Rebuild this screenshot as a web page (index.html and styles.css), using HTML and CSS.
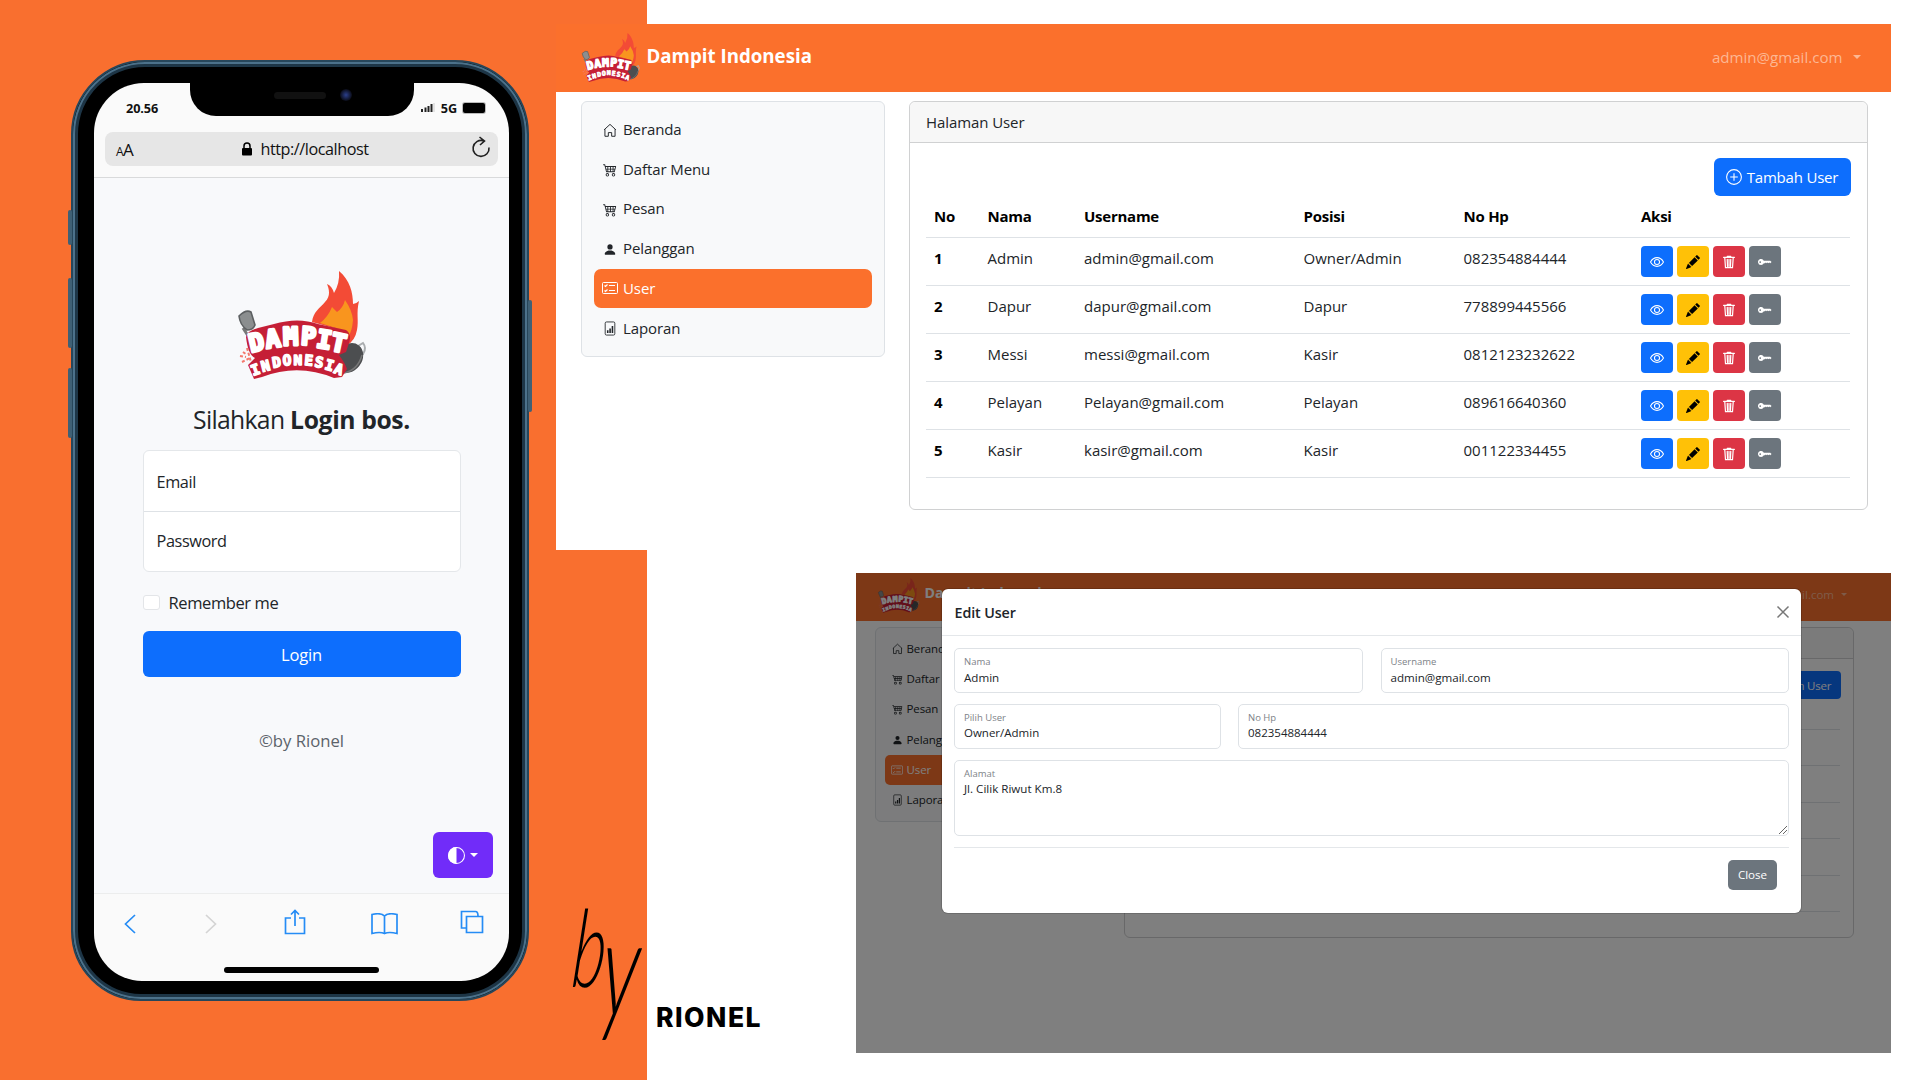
FILE: index.html
```html
<!DOCTYPE html>
<html lang="id">
<head>
<meta charset="utf-8">
<title>Dampit Indonesia</title>
<link rel="stylesheet" href="styles.css">
</head>
<body>
<svg class="sprite" aria-hidden="true">
  <symbol id="logo" viewBox="0 0 127 106" overflow="visible">
    <path d="M5 57L16 74" stroke="#777" stroke-width="3"/>
    <path d="M1 45Q8 38 13 41L17 54Q15 59 9 59Q2 54 1 45Z" fill="#8b8e8f" stroke="#5d6062" stroke-width="1.6"/>
    <path d="M5 81L9 84M2 85L8 86M4 91L12 87M9 77L13 91" stroke="#f4786c" stroke-width="2" stroke-dasharray="3 2"/>
    <path d="M74 51C75 41 82 37 87 31C93 25 91 18 89 13Q94 15 96 22Q102 12 101 0C112 9 115 22 115 33Q118 33 121 30C118 43 121 49 119 59Q117 70 109 74L96 57Z" fill="#f34b36"/>
    <path d="M82 52Q90 46 94 36L99 41Q105 37 107 29Q114 39 115 49Q114 61 110 66L98 57Z" fill="#f9951e"/>
    <path d="M120 75L125 72Q129 77 125 83L120 83" fill="none" stroke="#aaadaf" stroke-width="2"/>
    <ellipse cx="111" cy="87" rx="13" ry="16" fill="#4c4e50" transform="rotate(38 111 87)"/>
    <path d="M106 102Q120 99 124 84" fill="none" stroke="#777" stroke-width="1.5"/>
    <path d="M8 66Q9 60 20 57L36 53Q60 46 80 53L108 59Q114 63 111 72L108 81L101 84Q107 92 109 98L104 106L96 107Q60 92 24 106L16 108L10 94L17 87Q10 84 8 66Z" fill="#c51f36"/>
    <text class="logo-text logo-a" x="13 28.500 45.500 62.500 77.500 91.500" y="81.500 77.500 74.500 73.500 76 79" rotate="-13 -8 -2 4 9 12">DAMPIT</text>
    <text class="logo-text logo-b" x="15 24.500 35 45 55.500 66 76 86 95" y="105 101 97 94.500 93.500 94 95.500 98 101.500" rotate="-20 -14 -9 -4 0 5 10 15 20">INDONESIA</text>
  </symbol>
  <symbol id="house" viewBox="0 0 16 16"><path d="M1.200 7.300L8 1l6.800 6.300M2.200 6.600v8h3.900v-4.200h3.800v4.200h3.900v-8" fill="none" stroke="currentColor" stroke-width="1.100" stroke-linejoin="round"/></symbol>
  <symbol id="cart" viewBox="0 0 16 16"><path fill="currentColor" fill-rule="evenodd" d="M0 2.500A.5.5 0 0 1 .5 2H2a.5.5 0 0 1 .485.379L2.890 4H14.500a.5.5 0 0 1 .485.621l-1.500 6A.5.5 0 0 1 13 11H4a.5.5 0 0 1-.485-.379L1.610 3H.5a.5.5 0 0 1-.5-.5zM3.140 5l.5 2H5V5zM6 5v2h2V5zm3 0v2h2V5zm3 0v2h1.360l.5-2zm1.110 3H12v2h.610zM11 8H9v2h2zM8 8H6v2h2zM5 8H3.890l.5 2H5zM5 13a1 1 0 1 0 0 2 1 1 0 0 0 0-2m-2 1a2 2 0 1 1 4 0 2 2 0 0 1-4 0m9-1a1 1 0 1 0 0 2 1 1 0 0 0 0-2m-2 1a2 2 0 1 1 4 0 2 2 0 0 1-4 0"/></symbol>
  <symbol id="person" viewBox="0 0 16 16"><path fill="currentColor" d="M3 14s-1 0-1-1 1-4 6-4 6 3 6 4-1 1-1 1zm5-6a3 3 0 1 0 0-6 3 3 0 0 0 0 6"/></symbol>
  <symbol id="checklist" viewBox="0 0 16 16"><g fill="none" stroke="currentColor"><rect x=".5" y="2.500" width="15" height="11" rx="1"/><path d="M7 5.500h6M7 10.500h6M2.500 5.500l1 1 2-2M2.500 10.500l1 1 2-2" stroke-width="1.100"/></g></symbol>
  <symbol id="graph" viewBox="0 0 16 16"><rect x="2.500" y=".5" width="11" height="15" rx="1.500" fill="none" stroke="currentColor"/><path d="M4.500 10h1.800v3H4.500zM7.200 8H9v5H7.200zM9.900 5h1.800v8H9.900z" fill="currentColor"/></symbol>
  <symbol id="eye" viewBox="0 0 16 16"><path d="M.6 8S3.300 3 8 3s7.400 5 7.400 5S12.700 13 8 13 .6 8 .6 8Z" fill="none" stroke="currentColor" stroke-width="1.200"/><circle cx="8" cy="8" r="2.900" fill="none" stroke="currentColor" stroke-width="1.200"/></symbol>
  <symbol id="pencil" viewBox="0 0 16 16"><path fill="currentColor" d="M12.854.146a.5.5 0 0 0-.707 0L10.500 1.793 14.207 5.500l1.647-1.646a.5.5 0 0 0 0-.708zm.646 6.061L9.793 2.500 3.293 9H3.500a.5.5 0 0 1 .5.5v.5h.5a.5.5 0 0 1 .5.5v.5h.5a.5.5 0 0 1 .5.5v.5h.5a.5.5 0 0 1 .5.5v.207zm-7.468 7.468A.5.5 0 0 1 6 13.500V13h-.5a.5.5 0 0 1-.5-.5V12h-.5a.5.5 0 0 1-.5-.5V11h-.5a.5.5 0 0 1-.5-.5V10h-.5a.5.5 0 0 1-.175-.032l-.179.178a.5.5 0 0 0-.11.168l-2 5a.5.5 0 0 0 .65.65l5-2a.5.5 0 0 0 .168-.11z"/></symbol>
  <symbol id="trash" viewBox="0 0 16 16"><path d="M1.800 2.700h12.400M6 1.500h4M3.200 3.500l.8 11h8l.8-11M6 5l.3 8M8 5v8M10 5l-.3 8" fill="none" stroke="currentColor" stroke-width="1.400" stroke-linecap="round"/></symbol>
  <symbol id="key" viewBox="0 0 16 16"><path fill="currentColor" fill-rule="evenodd" d="M3.500 11.500a3.500 3.500 0 1 1 3.163-5H14L15.500 8 14 9.500l-1-1-1 1-1-1-1 1-1-1-1 1H6.663a3.500 3.500 0 0 1-3.163 2M2.500 9a1 1 0 1 0 0-2 1 1 0 0 0 0 2"/></symbol>
  <symbol id="plus" viewBox="0 0 16 16"><path d="M8 4.200v7.600M4.200 8h7.600" stroke="currentColor" stroke-width="1.100"/><circle cx="8" cy="8" r="7.400" fill="none" stroke="currentColor" stroke-width="1.100"/></symbol>
</svg>

<div class="stage">
  <div class="backdrop-orange"></div>

  <section class="phone">
    <i class="key k1"></i><i class="key k2"></i><i class="key k3"></i><i class="key k4"></i>
    <div class="notch"><i class="speaker"></i><i class="camera"></i></div>
    <div class="screen">
      <div class="status">
        <b>20.56</b>
        <span class="status-right">
          <svg width="14" height="10" viewBox="0 0 14 10"><path d="M0 6h2v3H0zM3.500 4.500h2V9h-2zM6.500 3h2v6h-2zM9.500 1h2v8h-2z" fill="#222"/><path d="M12.500 0h1v9h-1z" fill="#ccc"/></svg>
          <b>5G</b><i class="battery"></i>
        </span>
      </div>
      <div class="urlbar">
        <span class="aa"><small>A</small>A</span>
        <span class="url"><svg width="10" height="14" viewBox="0 0 10 14"><path d="M2 6V4a3 3 0 0 1 6 0v2" fill="none" stroke="#000" stroke-width="1.500"/><rect y="6" width="10" height="7.500" rx="1"/></svg>http://localhost</span>
        <svg class="reload" width="20" height="22" viewBox="0 0 20 22"><path d="M12.500 4.800A8 8 0 1 0 18 11.500M8.500 1l5 4-4.500 4" fill="none" stroke="#222" stroke-width="1.600"/></svg>
      </div>
      <div class="login">
        <svg class="login-logo"><use href="#logo"/></svg>
        <h1>Silahkan <b>Login bos.</b></h1>
        <div class="fields"><div>Email</div><div>Password</div></div>
        <div class="remember"><i></i><span>Remember me</span></div>
        <div class="login-btn">Login</div>
        <p>©by Rionel</p>
        <div class="theme"><svg width="17" height="17" viewBox="0 0 16 16"><circle cx="8" cy="8" r="7.500" fill="none" stroke="#fff"/><path d="M8 0a8 8 0 0 0 0 16z" fill="#fff"/></svg><i class="caret"></i></div>
      </div>
      <div class="toolbar">
        <svg width="12" height="20" viewBox="0 0 12 20"><path d="M11 1L1.500 10l9.500 9"/></svg>
        <svg class="dim" width="12" height="20" viewBox="0 0 12 20"><path d="M1 1l9.500 9L1 19"/></svg>
        <svg class="share" width="22" height="26" viewBox="0 0 22 26"><path d="M7 9H1.500v15.500h19V9H15M11 17V1.500M7 5.500l4-4 4 4"/></svg>
        <svg class="book" width="27" height="22" viewBox="0 0 27 22"><path d="M13.500 3Q10-.5 1 1.500v19q8-2 12.500 0 4.500-2 12.500 0v-19Q17-.5 13.500 3v17.500"/></svg>
        <svg class="tabs" width="24" height="24" viewBox="0 0 24 24"><path d="M6.500 6.500h16v16h-16zM6 18H1.500V1.500h14q2.500 0 2.500 4.500"/></svg>
      </div>
      <div class="homebar"></div>
    </div>
  </section>

  <section class="panel panel-main">
    <header class="nav"><svg class="brand-logo"><use href="#logo"/></svg><b>Dampit Indonesia</b><span class="account">admin@gmail.com<i class="caret"></i></span></header>
    <div class="content">
      <nav class="side">
        <a><svg><use href="#house"/></svg>Beranda</a>
        <a><svg><use href="#cart"/></svg>Daftar Menu</a>
        <a><svg><use href="#cart"/></svg>Pesan</a>
        <a><svg><use href="#person"/></svg>Pelanggan</a>
        <a class="active"><svg class="wide"><use href="#checklist"/></svg>User</a>
        <a><svg><use href="#graph"/></svg>Laporan</a>
      </nav>
      <div class="card">
        <div class="card-head">Halaman User</div>
        <div class="card-body">
          <div class="add"><svg><use href="#plus"/></svg>Tambah User</div>
          <table>
            <colgroup><col class="c1"><col class="c2"><col class="c3"><col class="c4"><col class="c5"><col></colgroup>
            <thead><tr><th>No</th><th>Nama</th><th>Username</th><th>Posisi</th><th>No Hp</th><th>Aksi</th></tr></thead>
            <tbody>
              <tr><th>1</th><td>Admin</td><td>admin@gmail.com</td><td>Owner/Admin</td><td>082354884444</td><td><div class="acts"><i class="blue"><svg><use href="#eye"/></svg></i><i class="yellow"><svg><use href="#pencil"/></svg></i><i class="red"><svg><use href="#trash"/></svg></i><i class="gray"><svg><use href="#key"/></svg></i></div></td></tr>
              <tr><th>2</th><td>Dapur</td><td>dapur@gmail.com</td><td>Dapur</td><td>778899445566</td><td><div class="acts"><i class="blue"><svg><use href="#eye"/></svg></i><i class="yellow"><svg><use href="#pencil"/></svg></i><i class="red"><svg><use href="#trash"/></svg></i><i class="gray"><svg><use href="#key"/></svg></i></div></td></tr>
              <tr><th>3</th><td>Messi</td><td>messi@gmail.com</td><td>Kasir</td><td>0812123232622</td><td><div class="acts"><i class="blue"><svg><use href="#eye"/></svg></i><i class="yellow"><svg><use href="#pencil"/></svg></i><i class="red"><svg><use href="#trash"/></svg></i><i class="gray"><svg><use href="#key"/></svg></i></div></td></tr>
              <tr><th>4</th><td>Pelayan</td><td>Pelayan@gmail.com</td><td>Pelayan</td><td>089616640360</td><td><div class="acts"><i class="blue"><svg><use href="#eye"/></svg></i><i class="yellow"><svg><use href="#pencil"/></svg></i><i class="red"><svg><use href="#trash"/></svg></i><i class="gray"><svg><use href="#key"/></svg></i></div></td></tr>
              <tr><th>5</th><td>Kasir</td><td>kasir@gmail.com</td><td>Kasir</td><td>001122334455</td><td><div class="acts"><i class="blue"><svg><use href="#eye"/></svg></i><i class="yellow"><svg><use href="#pencil"/></svg></i><i class="red"><svg><use href="#trash"/></svg></i><i class="gray"><svg><use href="#key"/></svg></i></div></td></tr>
            </tbody>
          </table>
        </div>
      </div>
    </div>
  </section>

  <section class="panel panel-modal">
    <header class="nav"><svg class="brand-logo"><use href="#logo"/></svg><b>Dampit Indonesia</b><span class="account">admin@gmail.com<i class="caret"></i></span></header>
    <div class="content">
      <nav class="side">
        <a><svg><use href="#house"/></svg>Beranda</a>
        <a><svg><use href="#cart"/></svg>Daftar Menu</a>
        <a><svg><use href="#cart"/></svg>Pesan</a>
        <a><svg><use href="#person"/></svg>Pelanggan</a>
        <a class="active"><svg class="wide"><use href="#checklist"/></svg>User</a>
        <a><svg><use href="#graph"/></svg>Laporan</a>
      </nav>
      <div class="card">
        <div class="card-head"></div>
        <div class="card-body">
          <div class="add"><svg><use href="#plus"/></svg>Tambah User</div>
          <div class="rules"><i></i><i></i><i></i><i></i><i></i><i></i></div>
        </div>
      </div>
    </div>
    <div class="shade"></div>
    <div class="modal">
      <div class="modal-head"><h2>Edit User</h2><svg width="14" height="14" viewBox="0 0 14 14"><path d="M1.500 1.500l11 11M12.500 1.500l-11 11" stroke="#777" stroke-width="1.500"/></svg></div>
      <div class="modal-body">
        <div class="row row-a"><div class="field"><small>Nama</small>Admin</div><div class="field"><small>Username</small>admin@gmail.com</div></div>
        <div class="row row-b"><div class="field"><small>Pilih User</small>Owner/Admin</div><div class="field"><small>No Hp</small>082354884444</div></div>
        <div class="field area"><small>Alamat</small>Jl. Cilik Riwut Km.8<svg class="grip" width="8" height="8" viewBox="0 0 8 8"><path d="M0 8L8 0M4 8l4-4" stroke="#555" stroke-width=".9"/></svg></div>
        <div class="modal-foot"><span>Close</span></div>
      </div>
    </div>
  </section>

  <div class="by"><span class="by-b">b</span><span class="by-y">y</span></div>
  <div class="rionel">RIONEL</div>
</div>
</body>
</html>
```
FILE: styles.css
```css
* { box-sizing: border-box; }
body { margin: 0; background: #fff; font-family: "Open Sans", "Noto Sans", sans-serif; color: #212529; }
.sprite { position: absolute; width: 0; height: 0; }
.stage { position: relative; width: 1920px; height: 1080px; overflow: hidden; }
.backdrop-orange { width: 646.5px; height: 1080px; background: #f96f2f; }
svg { flex: none; }
.caret { width: 0; height: 0; border: 4.5px solid transparent; border-top-color: currentColor; border-bottom: 0; }
.logo-text { font-family: "DejaVu Sans Mono", monospace; font-weight: bold; fill: #fff; stroke: #fff; stroke-linejoin: round; }
.logo-a { font-size: 25px; stroke-width: 2.8px; }
.logo-b { font-size: 14.500px; stroke-width: 1.500px; }
.brand-logo, .login-logo { overflow: visible; }

/* Phone */
.phone { position: absolute; left: 71px; top: 60px; width: 458px; height: 941px; border-radius: 74px 74px 70px 70px; background: #000; border: 2px solid #27465a; box-shadow: inset 0 0 0 2px #4c718a, inset 0 0 0 5px #1d3546; padding: 21px 18px 18px 21px; }
.key { position: absolute; width: 4px; background: #3f6075; border-radius: 2px; }
.k1 { left: -5px; top: 148px; height: 35px; }
.k2 { left: -5px; top: 216px; height: 70px; }
.k3 { left: -5px; top: 306px; height: 70px; }
.k4 { right: -5px; top: 238px; height: 112px; }
.notch { position: absolute; left: 117px; top: 18px; width: 224px; height: 36px; background: #000; border-radius: 0 0 26px 26px; display: flex; align-items: center; padding: 0 0 6px 84px; gap: 14px; }
.speaker { width: 52px; height: 7px; border-radius: 4px; background: #111; }
.camera { width: 12px; height: 12px; border-radius: 50%; background: radial-gradient(#2b3f8c, #0a0c18 70%); }
.screen { height: 898px; background: #fafafa; border-radius: 50px 50px 48px 48px; display: flex; flex-direction: column; color: #212529; overflow: hidden; }
.status { height: 49px; padding: 0 24px 0 32px; display: flex; align-items: center; justify-content: space-between; font-size: 12.700px; line-height: 46px; color: #111; }
.status b { letter-spacing: -.1px; }
.status-right { display: flex; align-items: center; gap: 6px; }
.battery { width: 22px; height: 10px; background: #000; border-radius: 2px; box-shadow: 0 0 0 1px #bbb; }
.urlbar { height: 34px; margin: 0 11px; border-radius: 8px; background: #e6e6e6; display: flex; align-items: center; justify-content: space-between; padding: 0 7px 0 11px; color: #111; font-size: 16.200px; line-height: 34px; }
.aa { font-size: 17px; width: 20px; letter-spacing: -.6px; white-space: nowrap; padding-top: 3px; }
.aa small { font-size: 12px; }
.url { display: flex; align-items: center; gap: 8px; letter-spacing: -.45px; padding-left: 4px; }
.reload { margin-top: -4px; }
.login { position: relative; margin-top: 11px; height: 717px; border-top: 1px solid #d9dadb; border-bottom: 1px solid #eceded; background: #f8f9fb; display: flex; flex-direction: column; align-items: center; }
.login-logo { width: 127px; height: 106px; margin-top: 93px; }
h1 { margin: 23px 0 0; font-size: 24.700px; line-height: 40px; font-weight: 400; letter-spacing: -.68px; white-space: nowrap; }
.login h1 b { letter-spacing: -.38px; }
.fields { width: 318px; height: 122px; margin-top: 10px; border: 1px solid #e4e7ea; border-radius: 6px; background: #fff; font-size: 16.300px; letter-spacing: -.4px; }
.fields div { height: 60px; line-height: 62px; padding-left: 13px; }
.fields div + div { border-top: 1px solid #dee2e6; line-height: 59px; }
.remember { width: 318px; margin-top: 18px; height: 24px; display: flex; align-items: center; gap: 9px; font-size: 16.500px; letter-spacing: -.4px; }
.remember i { width: 17px; height: 15px; border: 1px solid #e3e5e8; border-radius: 3px; background: #fff; }
.login-btn { width: 318px; height: 46px; margin-top: 17px; border-radius: 6px; background: #0d6efd; color: #fff; text-align: center; font-size: 16.500px; line-height: 47px; letter-spacing: -.2px; }
.login p { margin: 52px 0 0; font-size: 16.700px; line-height: 24px; letter-spacing: 0; color: #5c636a; }
.theme { position: absolute; right: 16px; bottom: 15px; width: 60px; height: 46px; border-radius: 6px; background: #712cf9; color: #fff; display: flex; align-items: center; justify-content: center; gap: 5px; }
.toolbar { height: 72px; padding: 0 0 13px 30px; display: flex; align-items: center; }
.toolbar svg { fill: none; stroke: #258cf5; stroke-width: 1.700; }
.toolbar .dim { stroke: #d4d4d4; margin-left: 68.500px; }
.toolbar .share { margin: -4px 0 0 67.500px; }
.toolbar .book { margin-left: 65px; }
.toolbar .tabs { margin: -3px 0 0 62px; }
.homebar { width: 155px; height: 6px; margin: 1px 0 0 130px; border-radius: 3px; background: #000; }

/* Admin panels */
.panel { position: absolute; background: #fff; overflow: hidden; }
.panel-main { left: 555.500px; top: 24px; width: 1335.500px; height: 526px; font-size: 15px; }
.nav { height: 68px; background: #fb702c; color: #fff; display: flex; align-items: center; padding: 0 30.500px 0 25px; }
.nav b { font-size: 18.700px; margin-left: 7px; line-height: 24px; padding-bottom: 5px; }
.brand-logo { width: 59px; height: 48px; margin-top: -3px; }
.account { margin-left: auto; display: flex; align-items: center; gap: 10px; color: #fdb793; font-size: 15.100px; padding-bottom: 2px; }
.account .caret { border-width: 4.5px; border-bottom: 0; }
.content { display: flex; align-items: flex-start; padding: 9px 23px 0 25.500px; gap: 24px; }
.side { width: 304px; height: 256px; border: 1px solid #dee2e6; border-radius: 6px; background: #f8f9fa; padding: 8px 12px; flex: none; }
.side a { display: flex; align-items: center; height: 39.700px; padding: 0 0 1.500px 9px; gap: 6px; border-radius: 7px; white-space: nowrap; letter-spacing: -.1px; }
.side svg { width: 14px; height: 15px; margin-top: 2px; }
.side .wide { width: 16px; height: 16px; margin: 1px -1px 0; }
.side .active { background: #fb702c; color: #fff; }
.card { flex: 1; height: 409px; border: 1px solid #d0d1d2; border-radius: 6px; }
.card-head { height: 41px; background: #f7f7f7; border-bottom: 1px solid #d0d1d2; border-radius: 6px 6px 0 0; line-height: 40px; padding-left: 16px; letter-spacing: -.08px; }
.card-body { padding: 15px 17px 0 16px; display: flex; flex-direction: column; }
.add { align-self: flex-end; height: 38px; width: 137px; border-radius: 6px; background: #0d6efd; color: #fff; display: flex; align-items: center; justify-content: center; gap: 5px; white-space: nowrap; letter-spacing: -.2px; margin-right: -.5px; }
.add svg { width: 16px; height: 16px; }
table { table-layout: fixed; width: 924px; border-collapse: collapse; margin-top: -1px; }
.c1 { width: 53.500px; } .c2 { width: 96.500px; } .c3 { width: 219.500px; } .c4 { width: 160px; } .c5 { width: 177.500px; }
th, td { text-align: left; padding: 0 0 0 8px; border-bottom: 1px solid #dee2e6; vertical-align: top; white-space: nowrap; }
th { color: #000; letter-spacing: -.25px; }
thead th { height: 39px; line-height: 42px; }
thead th, tbody th, tbody td { overflow: visible; }
thead tr { line-height: 38px; }
tbody th, tbody td { height: 48px; line-height: 41px; }
.acts { display: flex; gap: 4px; padding-top: 8px; }
.acts i { width: 32px; height: 31px; border-radius: 4px; display: flex; align-items: center; justify-content: center; color: #fff; }
.acts svg { width: 14px; height: 14px; }
.acts .blue { background: #0d6efd; }
.acts .yellow { background: #ffc107; color: #000; }
.acts .red { background: #dc3545; }
.acts .gray { background: #6c757d; }

.panel-modal { left: 855.500px; top: 573px; width: 1035.500px; height: 480px; font-size: 11.500px; }
.panel-modal .nav { height: 48px; padding: 0 44px 0 21px; }
.panel-modal .nav b { font-size: 14.200px; margin-left: 5px; padding-bottom: 9px; }
.panel-modal .brand-logo { width: 43px; height: 34px; margin-top: -4px; }
.panel-modal .account { gap: 7px; padding-bottom: 6px; font-size: 11.500px; }
.panel-modal .account .caret { border-width: 3.5px; border-bottom: 0; }
.panel-modal .content { padding: 6px 37px 0 19.500px; gap: 19px; }
.panel-modal .side { width: 230px; height: 195px; padding: 6px 9px; }
.panel-modal .side a { height: 30.200px; padding: 0 0 1px 6.500px; gap: 4px; border-radius: 5px; }
.panel-modal .side svg { width: 11px; height: 12px; margin-top: 1px; }
.panel-modal .side .wide { width: 12px; height: 12px; margin: 1px -.5px 0; }
.panel-modal .card { height: 311px; border-color: #d0d1d2; }
.panel-modal .card-head { height: 31px; }
.panel-modal .card-body { padding: 12px 13px 0 12px; }
.panel-modal .add { width: 104px; height: 28px; border-radius: 4px; gap: 4px; }
.panel-modal .add svg { width: 12px; height: 12px; }
.rules { margin-top: 30px; display: flex; flex-direction: column; gap: 35.400px; }
.rules i { height: 1px; background: #dee2e6; }
.shade { position: absolute; inset: 0; background: rgba(0, 0, 0, .5); }
.modal { position: absolute; left: 86.500px; top: 16px; width: 859px; height: 324px; border-radius: 6px; background: #fff; box-shadow: 0 0 0 1px rgba(0, 0, 0, .15); }
.modal-head { height: 47px; border-bottom: 1px solid #e4e7ea; display: flex; align-items: center; justify-content: space-between; padding: 0 11px 0 12.500px; }
h2 { margin: 0; font-size: 14.300px; font-weight: 600; letter-spacing: -.1px; }
.modal-body { padding: 12px 12px 0; display: flex; flex-direction: column; gap: 11px; }
.row { display: grid; height: 45px; }
.row-a { grid-template-columns: 1fr 1fr; column-gap: 18px; }
.row-b { grid-template-columns: 267px 1fr; column-gap: 17px; }
.field { position: relative; border: 1px solid #dee2e6; border-radius: 5px; padding: 5px 9px 0; font-size: 11.600px; line-height: 15px; }
.row-b .field, .area { line-height: 14px; }
.row-b .field { font-size: 11.500px; }
.field small { display: block; font-size: 9.500px; line-height: 16px; color: #7d8287; }
.area { height: 76px; }
.grip { position: absolute; right: 1px; bottom: 1px; }
.modal-foot { border-top: 1px solid #e4e7ea; display: flex; justify-content: flex-end; padding: 12px 12px 0 0; }
.modal-foot span { width: 49px; height: 30px; border-radius: 5px; background: #6c757d; color: #fff; text-align: center; line-height: 30px; font-size: 11.600px; }

/* Signature */
.by { position: absolute; left: 578px; top: 895px; width: 72px; height: 145px; color: #000; font-family: Lato, sans-serif; font-weight: 300; font-style: italic; display: flex; align-items: flex-start; }
.by span { line-height: 100px; display: block; }
.by-b { font-size: 108px; width: 30px; transform-origin: 0 0; transform: scaleX(.6) skewX(-8deg); }
.by-y { font-size: 108px; width: 34px; transform-origin: 0 0; transform: translateY(5px) scale(.75, 1.26) skewX(-8deg); }
.rionel { position: absolute; left: 656px; top: 1001px; font-family: Inter, sans-serif; font-weight: 800; font-size: 26.500px; line-height: 33px; letter-spacing: 1.500px; color: #000; }
```
